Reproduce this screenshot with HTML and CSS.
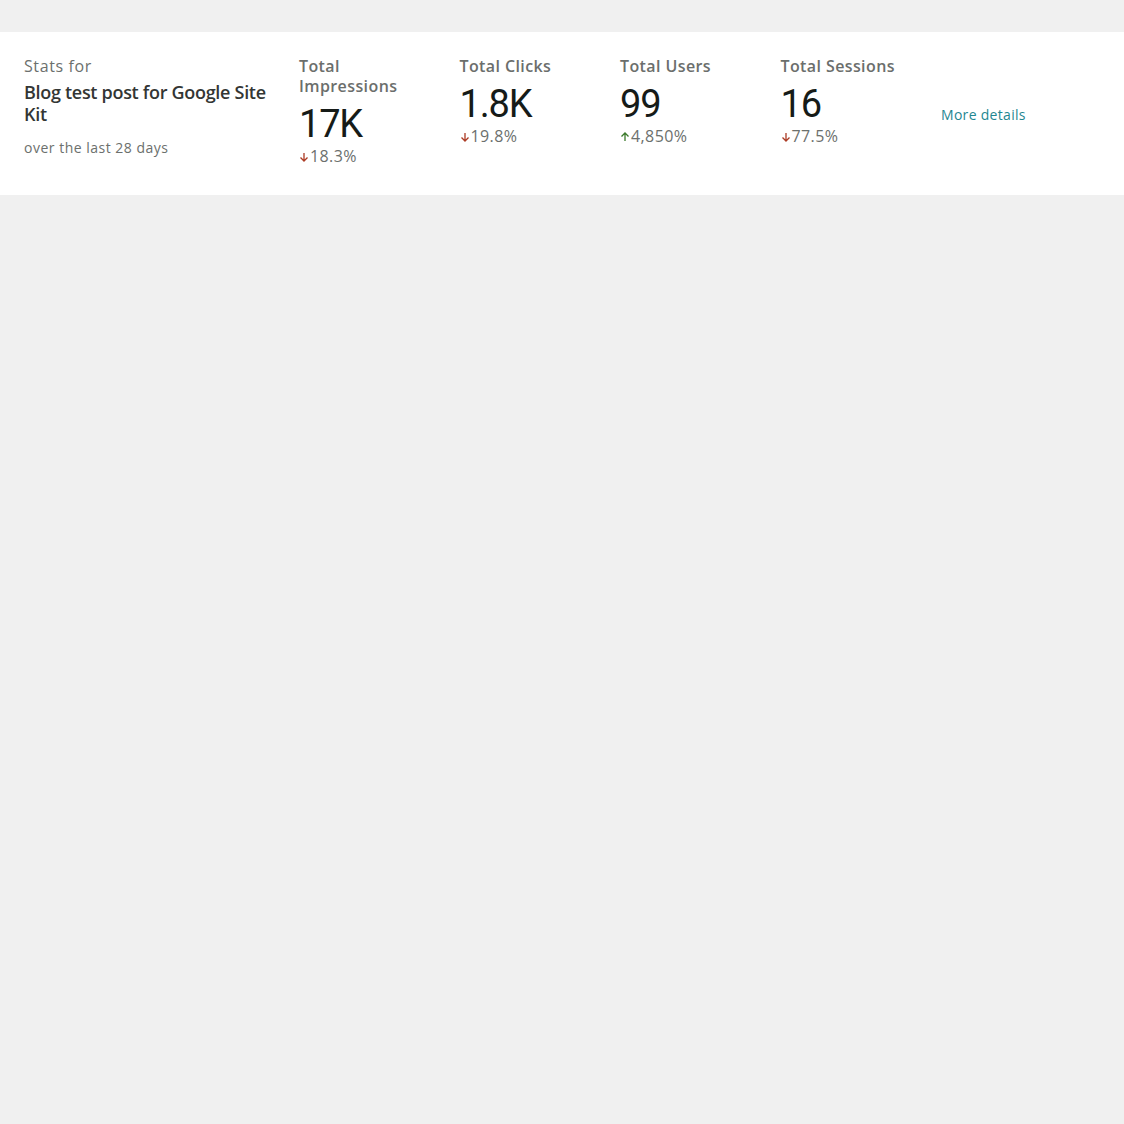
FILE: index.html
```html
<!DOCTYPE html>
<html lang="en">
<head>
<meta charset="utf-8">
<title>Stats</title>
<link rel="stylesheet" href="styles.css">
</head>
<body>
<section class="panel">
  <div class="intro">
    <div class="intro-label">Stats for</div>
    <div class="intro-title">Blog test post for Google Site Kit</div>
    <div class="intro-range">over the last 28 days</div>
  </div>
  <div class="metric">
    <div class="metric-label">Total Impressions</div>
    <div class="metric-value">17K</div>
    <div class="metric-change"><svg class="arrow down" viewBox="0 0 10 10"><path d="M5 1v8M1.5 5.5L5 9l3.5-3.5"/></svg>18.3%</div>
  </div>
  <div class="metric">
    <div class="metric-label">Total Clicks</div>
    <div class="metric-value">1.8K</div>
    <div class="metric-change"><svg class="arrow down" viewBox="0 0 10 10"><path d="M5 1v8M1.5 5.5L5 9l3.5-3.5"/></svg>19.8%</div>
  </div>
  <div class="metric">
    <div class="metric-label">Total Users</div>
    <div class="metric-value">99</div>
    <div class="metric-change"><svg class="arrow up" viewBox="0 0 10 10"><path d="M5 9V1M1.5 4.5L5 1l3.5 3.5"/></svg>4,850%</div>
  </div>
  <div class="metric">
    <div class="metric-label">Total Sessions</div>
    <div class="metric-value">16</div>
    <div class="metric-change"><svg class="arrow down" viewBox="0 0 10 10"><path d="M5 1v8M1.5 5.5L5 9l3.5-3.5"/></svg>77.5%</div>
  </div>
  <div class="more">
    <a class="more-link" href="#">More details</a>
  </div>
</section>
</body>
</html>
```
FILE: styles.css
```css
html, body {
  margin: 0;
  padding: 0;
  background: #f0f0f0;
}

body {
  padding-top: 32px;
  font-family: "Open Sans", "Liberation Sans", Arial, sans-serif;
}

.panel {
  background: #ffffff;
  display: grid;
  grid-template-columns: 251px repeat(5, 136.5px);
  column-gap: 24px;
  padding: 24px 24px 28px;
}

.intro-label {
  padding-top: 2px;
  font-size: 16px;
  line-height: 16px;
  color: #6c706d;
  letter-spacing: 0.6px;
}

.intro-title {
  margin-top: 7px;
  font-size: 18px;
  line-height: 22px;
  font-weight: 600;
  color: #333634;
  letter-spacing: -0.3px;
}

.intro-range {
  margin-top: 13px;
  font-size: 14px;
  line-height: 20px;
  color: #6c706d;
  letter-spacing: 0.5px;
}

.metric-label {
  font-size: 16px;
  line-height: 20px;
  font-weight: 600;
  color: #6b6e6c;
  letter-spacing: 0.4px;
}

.metric-value {
  margin-top: 6px;
  font-family: Roboto, "Open Sans", sans-serif;
  font-size: 38px;
  line-height: 44px;
  color: #161b18;
  letter-spacing: -1.2px;
}

.metric-change {
  display: flex;
  align-items: center;
  margin-top: -1px;
  font-size: 16px;
  line-height: 22px;
  color: #6c706d;
  letter-spacing: 0.4px;
}

.arrow {
  width: 10px;
  height: 10px;
  margin-right: 1px;
  margin-top: 2px;
  fill: none;
  stroke-width: 1.3;
}

.arrow.down {
  stroke: #ac3b24;
}

.arrow.up {
  stroke: #3b7a2b;
}

.more {
  align-self: center;
  margin-top: 4px;
}

.more-link {
  font-size: 14px;
  line-height: 20px;
  color: #1f8791;
  text-decoration: none;
  letter-spacing: 0.3px;
}
```
